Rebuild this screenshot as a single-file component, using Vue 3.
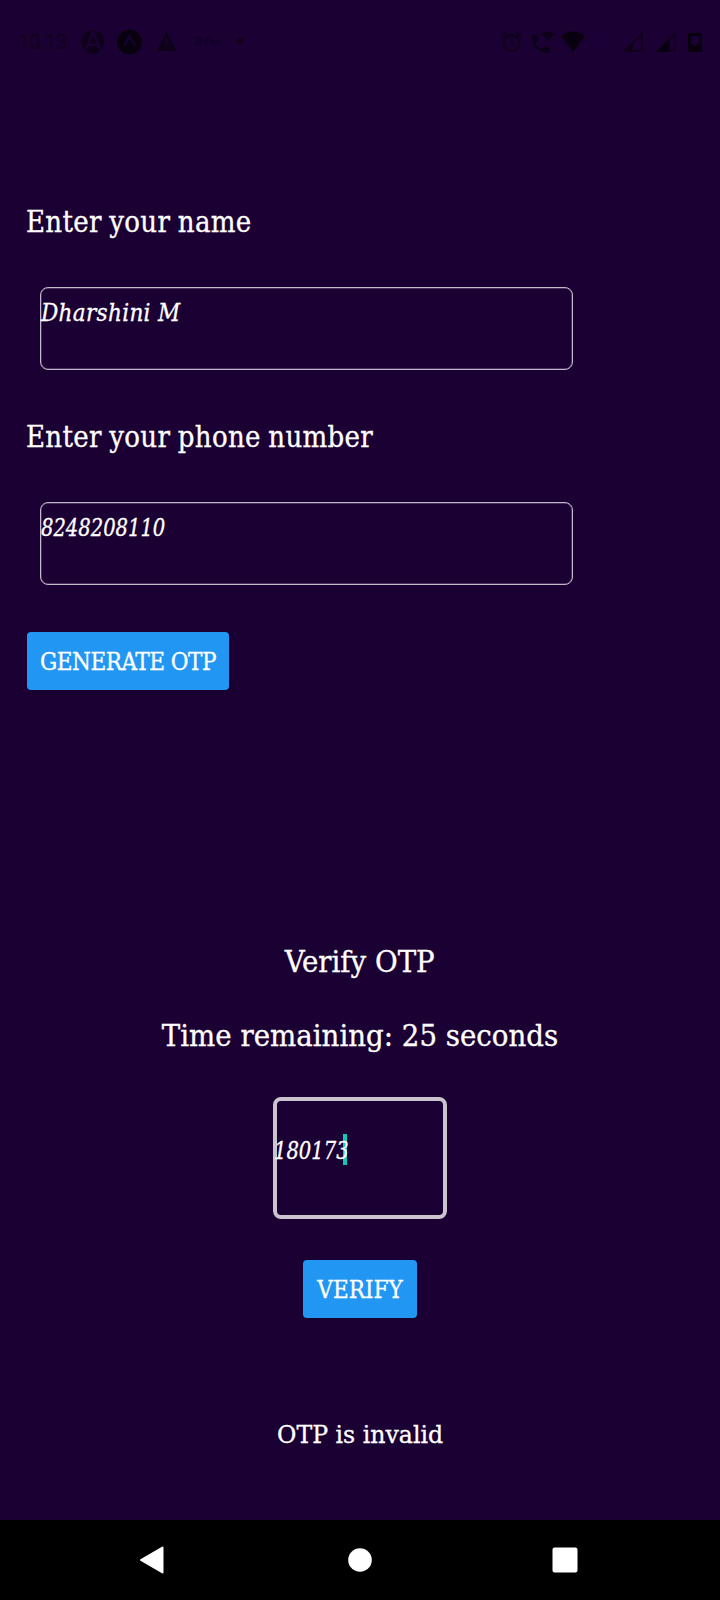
<script setup>
import { ref } from 'vue'

const name = ref('Dharshini M')
const phone = ref('8248208110')
const otp = ref('180173')
const seconds = ref(25)
</script>

<template>
  <div class="screen">
    <header class="status">
      <span class="clock">10.13</span>
      <svg class="left-icons" width="170" height="36" viewBox="0 0 170 36">
        <circle cx="13" cy="18" r="11.5" fill="#0d0018" />
        <path d="M5 27 13 8l8 19M9 21h8" fill="none" stroke="#1b0034" stroke-width="2.6" />
        <path d="M9 25h8l1 3q-5 3-10 0z" fill="#0d0018" />
        <circle cx="49.500" cy="18" r="12.500" fill="#09000f" />
        <path d="M44 22l5.500-10 5.500 10" fill="none" stroke="#180030" stroke-width="2.400" />
        <path d="M86.500 8l10 19h-20z" fill="#0d0018" />
        <path d="M86.500 14v7m0 2v2" stroke="#1b0034" stroke-width="2" />
        <path d="M115 15c4-3 7-1 6 5-5 1-6-2-1-3m6 4v-6c5-2 6 0 5 6m3-5c-1 5 5 5 5 0v4" fill="none" stroke="#13002a" stroke-width="2.400" />
        <circle cx="160" cy="17" r="3.500" fill="#10001e" />
      </svg>
      <svg class="right-icons" width="210" height="36" viewBox="0 0 210 36">
        <g fill="none" stroke="#12001f" stroke-width="2.400">
          <circle cx="12.500" cy="19" r="8" />
          <path d="M3 12l5-4m9 0 5 4M12.500 14v5l4 3" />
        </g>
        <path d="M33 11h5l1 6-3 3q3 4 6 5l3-3 6 2v5q-18 0-18-18z" fill="#0d0018" />
        <path d="M42 10q7-5 14 0l-7 7z" fill="#0d0018" />
        <path d="M62 12q12-9 24 0L74 28z" fill="#08000e" />
        <path d="M93 13h24M93 19h24" stroke="#190038" stroke-width="3" stroke-dasharray="5 3" />
        <path d="M143 10v17h-17z" fill="none" stroke="#12001f" stroke-width="2" />
        <path d="M134 18v10h-10z" fill="#10001c" />
        <path d="M176 10v17h-17z" fill="none" stroke="#12001f" stroke-width="2" />
        <path d="M171 14v14h-14z" fill="#08000e" />
        <path d="M189 9h14v19h-14z" fill="#09000f" />
        <path d="M192 12h8v8h-2v2h-4v-2h-2z" fill="#1b0034" />
      </svg>
    </header>

    <main class="form">
      <label class="label">Enter your name</label>
      <div class="field">{{ name }}</div>
      <label class="label">Enter your phone number</label>
      <div class="field"><span class="digits">{{ phone }}</span></div>
      <button class="btn generate">GENERATE OTP</button>
    </main>

    <section class="verify">
      <h1 class="label title">Verify OTP</h1>
      <p class="label timer">Time remaining: {{ seconds }} seconds</p>
      <div class="otp"><span class="digits">{{ otp }}</span><i class="caret"></i></div>
      <button class="btn submit">VERIFY</button>
      <p class="message">OTP is invalid</p>
    </section>

    <nav class="nav">
      <svg width="26" height="30" viewBox="0 0 26 30"><path d="M2 15 23.500 2.500v25z" fill="#fff" stroke="#fff" stroke-width="2" stroke-linejoin="round" /></svg>
      <svg class="home" width="24" height="24" viewBox="0 0 24 24"><circle cx="12" cy="12" r="11.800" fill="#fff" /></svg>
      <svg width="26" height="26" viewBox="0 0 26 26"><rect x=".5" y=".5" width="25" height="25" rx="2" fill="#fff" /></svg>
    </nav>
  </div>
</template>

<style>
body { margin: 0; background: #1b0034; }
</style>

<style scoped>
.screen {
  width: 720px;
  height: 1600px;
  display: flex;
  flex-direction: column;
  background: #1b0034;
  color: #fff;
  font-family: "DejaVu Serif Condensed", "DejaVu Serif", serif;
  font-stretch: condensed;
  -webkit-text-stroke: .3px currentColor;
  overflow: hidden;
}
.status {
  height: 202px;
  box-sizing: border-box;
  padding: 24px 11px 0 18px;
  display: flex;
  align-items: flex-start;
}
.clock {
  width: 62px;
  font: 20px/36px Roboto, sans-serif;
  letter-spacing: -.3px;
  color: #120021;
}
.right-icons { margin-left: auto; }
.form {
  height: 742px;
  padding-left: 27px;
  display: flex;
  flex-direction: column;
  align-items: flex-start;
}
.label {
  margin: 0;
  font-size: 29px;
  font-weight: 400;
  line-height: 40px;
  white-space: nowrap;
}
.form .label {
  height: 40px;
  line-height: 41px;
  letter-spacing: .3px;
  word-spacing: -1px;
  text-indent: -1px;
}
.field {
  box-sizing: border-box;
  width: 533px;
  height: 83px;
  margin: 45px 0 47px 13px;
  padding-top: 10px;
  border: 1px solid #c3b9cb;
  box-shadow: inset 0 0 0 .5px #c3b9cb88;
  border-radius: 8px;
  font-size: 24px;
  font-style: italic;
  letter-spacing: .3px;
  line-height: 30px;
}
.digits {
  display: inline-block;
  letter-spacing: 0;
  transform: scaleX(.905);
  transform-origin: left;
}
.btn {
  height: 58px;
  padding: 2px 0 0;
  border: 0;
  border-radius: 4px;
  background: #2196f3;
  color: #fff;
  font-family: inherit;
  font-stretch: inherit;
  font-size: 24px;
  line-height: 56px;
  box-shadow: 0 2px 4px #11002244;
  white-space: nowrap;
}
.generate {
  width: 202px;
  letter-spacing: -.5px;
}
.verify {
  height: 576px;
  display: flex;
  flex-direction: column;
  align-items: center;
}
.verify .label {
  height: 40px;
  line-height: 37px;
  transform: scaleX(1.06);
}
.verify .timer { margin-top: 34px; }
.otp {
  box-sizing: border-box;
  width: 174px;
  height: 122px;
  margin-top: 39px;
  border: 4px solid #cbc4cf;
  border-radius: 8px;
  display: flex;
  align-items: center;
  font-size: 24px;
  font-style: italic;
}
.otp .digits { margin: -15px 0 0 -3px; }
.caret {
  width: 4px;
  height: 31px;
  margin: -17px 0 0 -13px;
  background: #10c9bb;
}
.submit { width: 114px; margin-top: 41px; }
.message {
  margin: 98px 0 0;
  font-size: 25px;
  line-height: 37px;
  transform: scaleX(1.05);
}
.nav {
  height: 80px;
  display: flex;
  align-items: center;
  justify-content: space-between;
  padding: 0 142px 0 139px;
  box-sizing: border-box;
  background: #000;
}
.home { margin-left: 3px; }
</style>
